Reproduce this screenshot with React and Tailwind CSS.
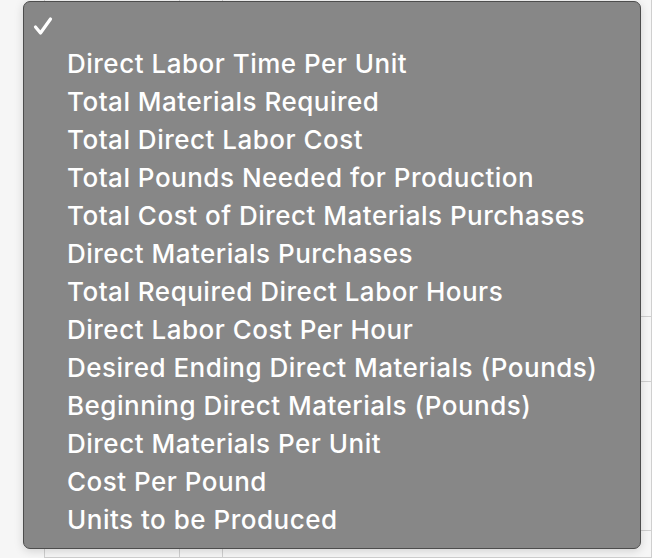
const items = [
  '',
  'Direct Labor Time Per Unit',
  'Total Materials Required',
  'Total Direct Labor Cost',
  'Total Pounds Needed for Production',
  'Total Cost of Direct Materials Purchases',
  'Direct Materials Purchases',
  'Total Required Direct Labor Hours',
  'Direct Labor Cost Per Hour',
  'Desired Ending Direct Materials (Pounds)',
  'Beginning Direct Materials (Pounds)',
  'Direct Materials Per Unit',
  'Cost Per Pound',
  'Units to be Produced',
];

function Check() {
  return (
    <svg width="20" height="20" viewBox="0 0 20 20" className="shrink-0">
      <path d="M2.5 11 L7.5 17 L17.5 3" fill="none" stroke="#fff" strokeWidth="3.2" strokeLinecap="round" strokeLinejoin="round" />
    </svg>
  );
}

export default function App() {
  return (
    <div className="relative w-[652px] h-[558px] overflow-hidden bg-[#f6f6f6]" style={{ fontFamily: 'Inter, "Liberation Sans", sans-serif' }}>
      {/* sheet grid behind the menu */}
      <div className="grid grid-cols-[45px_135px_43px_1fr] grid-rows-[317px_65px_149px_1fr] w-full h-full">
        {Array.from({ length: 16 }).map((_, i) => (
          <div key={i} className={i % 4 === 0 ? 'border-r border-[#cfcfcf]' : 'border-r border-b border-[#cfcfcf]'} />
        ))}
      </div>

      {/* dropdown menu */}
      <div className="absolute left-[23px] top-[1px] w-[618px] h-[548px] rounded-[7px] bg-[#878787] border border-[#4d4d4d] shadow-[0_2px_10px_rgba(0,0,0,0.15)] pt-[5px]">
        {items.map((label, i) => (
          <div key={i} className="h-[38px] flex items-center text-white text-[26px] font-medium tracking-[0.5px] leading-none">
            <div className="w-[43px] pl-[9px] flex items-center">
              {i === 0 && <Check />}
            </div>
            <span>{label}</span>
          </div>
        ))}
      </div>
    </div>
  );
}
